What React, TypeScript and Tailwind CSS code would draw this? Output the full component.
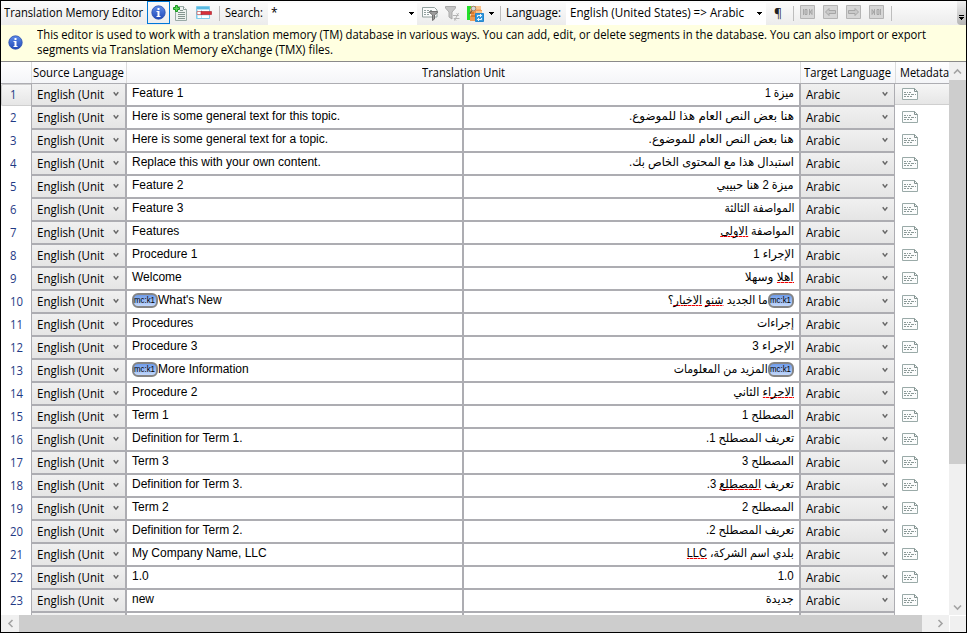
import { useLayoutEffect, useRef, type ReactNode } from "react";

/** Single line of text, condensed or expanded horizontally to a given width. */
function Fit({ w, right, className = "", children }: { w: number; right?: boolean; className?: string; children: ReactNode }) {
  const ref = useRef<HTMLSpanElement>(null);
  useLayoutEffect(() => {
    const el = ref.current;
    if (!el) return;
    el.style.transform = "none";
    const natural = el.getBoundingClientRect().width;
    if (natural > 0) el.style.transform = `scaleX(${w / natural})`;
  }, [w]);
  return (
    <span ref={ref} className={`inline-block shrink-0 whitespace-pre ${right ? "origin-right" : "origin-left"} ${className}`}>
      {children}
    </span>
  );
}

type Row = { en: string; ar: ReactNode; w: number; tag?: boolean };

const Bad = ({ children }: { children: ReactNode }) => (
  <span className="bg-[repeating-linear-gradient(90deg,#f00000_0_3px,#ff9090_3px_4px)] bg-[length:100%_1px] bg-[position:0_calc(100%-1px)] bg-no-repeat">{children}</span>
);

const rows: Row[] = [
  { en: "Feature 1", ar: "ميزة 1", w: 29 },
  { en: "Here is some general text for this topic.", ar: "هنا بعض النص العام هذا للموضوع.", w: 165 },
  { en: "Here is some general text for a topic.", ar: "هنا بعض النص العام للموضوع.", w: 145 },
  { en: "Replace this with your own content.", ar: "استبدال هذا مع المحتوى الخاص بك.", w: 165 },
  { en: "Feature 2", ar: "ميزة 2 هنا حبيبي", w: 77 },
  { en: "Feature 3", ar: "المواصفة الثالثة", w: 70 },
  { en: "Features", ar: <>المواصفة <Bad>الاولى</Bad></>, w: 74 },
  { en: "Procedure 1", ar: "الإجراء 1", w: 41 },
  { en: "Welcome", ar: <><Bad>اهلا</Bad> وسهلا</>, w: 49 },
  { en: "What's New", ar: <>ما الجديد <Bad>شنو</Bad> <Bad>الاخبار</Bad>؟</>, w: 100, tag: true },
  { en: "Procedures", ar: "إجراءات", w: 37 },
  { en: "Procedure 3", ar: "الإجراء 3", w: 42 },
  { en: "More Information", ar: "المزيد من المعلومات", w: 94, tag: true },
  { en: "Procedure 2", ar: <><Bad>الاجراء</Bad> الثاني</>, w: 61 },
  { en: "Term 1", ar: "المصطلح 1", w: 52 },
  { en: "Definition for Term 1.", ar: "تعريف المصطلح 1.", w: 88 },
  { en: "Term 3", ar: "المصطلح 3", w: 52 },
  { en: "Definition for Term 3.", ar: <>تعريف <Bad>المصطلع</Bad> 3.</>, w: 87 },
  { en: "Term 2", ar: "المصطلح 2", w: 52 },
  { en: "Definition for Term 2.", ar: "تعريف المصطلح 2.", w: 88 },
  { en: "My Company Name, LLC", ar: <>بلدي اسم الشركة، <Bad>LLC</Bad></>, w: 107 },
  { en: "1.0", ar: "1.0", w: 16 },
  { en: "new", ar: "جديدة", w: 28 },
];

const Tag = () => (
  <span dir="ltr" className="flex h-[15px] w-[26px] shrink-0 items-center rounded-[6px] border-2 border-[#858585] bg-linear-to-b from-[#6f9cea] to-[#c3d8fb]">
    <Fit w={21} className="text-[9px] leading-[11px] text-black">mc:k1</Fit>
  </span>
);

const Chevron = () => (
  <svg width="6" height="6" viewBox="0 0 6 6" className="mb-[2px] shrink-0">
    <path d="M.7 1.2 3 4.2 5.3 1.2" fill="none" stroke="#666" strokeWidth="1.4" />
  </svg>
);

const ScrollArrow = ({ d, color = "#a3a3a3" }: { d: string; color?: string }) => (
  <svg width="9" height="9" viewBox="0 0 9 9">
    <path d={d} fill="none" stroke={color} strokeWidth="1.6" />
  </svg>
);
const UP = "M1 6.5 4.5 3 8 6.5";
const DOWN = "M1 2.5 4.5 6 8 2.5";
const LEFT = "M6.5 1 3 4.5 6.5 8";
const RIGHT = "M2.5 1 6 4.5 2.5 8";

const DropArrow = () => (
  <svg width="5" height="3" viewBox="0 0 5 3" shapeRendering="crispEdges" className="shrink-0">
    <path d="M0 0h5v1H4v1H3v1H2V2H1V1H0z" fill="#000" />
  </svg>
);

const Sep = ({ className }: { className: string }) => <div className={`h-[15px] w-px shrink-0 bg-[#bdbdbd] ${className}`} />;

const InfoIcon = () => (
  <svg width="15" height="15" viewBox="0 0 15 15" className="shrink-0">
    <defs>
      <linearGradient id="info" x1="0" y1="0" x2="0" y2="1">
        <stop offset="0" stopColor="#5f8ce8" />
        <stop offset="1" stopColor="#2049b8" />
      </linearGradient>
    </defs>
    <circle cx="7.5" cy="7.5" r="6.7" fill="url(#info)" stroke="#2b4fae" strokeWidth=".8" />
    <path d="M6.5 3h2v2h-2zM5.500 6h3v5h1v1h-4v-1h1V7h-1z" fill="#fff" />
  </svg>
);

const AddDocIcon = () => (
  <svg width="15" height="16" viewBox="0 0 15 16" className="mb-px ml-[3px] shrink-0">
    <path d="M2.5 1.5h8l3 3v11h-11z" fill="#edf1ef" stroke="#9aaaa6" />
    <path d="M10.5 1.5v3h3" fill="#fff" stroke="#8b9c98" />
    <path d="M7 5.5h3M5 7.5h7M5 9.5h7M5 11.5h7M5 13.5h7" stroke="#84958f" />
    <path d="M2.5.5h2v2h2v2h-2v2h-2v-2h-2v-2h2z" fill="#5fd35a" stroke="#199a20" />
  </svg>
);

const DeleteRowIcon = () => (
  <svg width="16" height="14" viewBox="0 0 16 14" className="ml-[8px] shrink-0">
    <path d="M.5.5h13v12H.5z" fill="#b7e3f5" stroke="#7fcbea" />
    <path d="M1 1h12v2H1z" fill="#58b8e0" />
    <path d="M2 4h3v1.500H2zm4 0h7v1.500H6zM2 9.500h3V12H2zm4 0h7V12H6z" fill="#fff" />
    <path d="M1 5.500h5v3H1z" fill="#fff" stroke="#c66" strokeWidth=".8" />
    <path d="M5 5.500h10.500v3H5z" fill="#d8303a" stroke="#a81f28" strokeWidth=".6" />
  </svg>
);

const CardFilterIcon = () => (
  <svg width="16" height="15" viewBox="0 0 16 15" className="ml-[5px] shrink-0">
    <path d="M.5 1.5h12l2.500 2.500v7H.5z" fill="#fbfcfc" stroke="#93a19f" />
    <path d="M2 4.500h9M2 6.500h6M2 8.500h6" stroke="#93a19f" strokeDasharray="2 1" />
    <path d="M7.500 5.500h8v1l-3 2.500v4l-2 1.500V9l-3-2.500z" fill="#9c9c9c" stroke="#666" strokeWidth=".9" />
  </svg>
);

const FilterOffIcon = () => (
  <svg width="15" height="16" viewBox="0 0 15 16" className="ml-[7px] shrink-0">
    <path d="M.5 1.500h10v1.500L7 7v7l-3-2V7L.5 3z" fill="#c4c4c4" stroke="#a9a9a9" />
    <path d="M8 10.500h5.500M11.500 8.500l2 2M14.500 13.500H9M11 15.500l-2-2M13.500 8l-4 7.500" fill="none" stroke="#b4b4b4" />
  </svg>
);

const PeopleIcon = () => (
  <svg width="17" height="17" viewBox="0 0 17 17" className="ml-[7px] shrink-0">
    <path d="M0 1h4v3H3v2h1v3H3v2h1v4H0z" fill="#23e02b" />
    <path d="M4 1h10v4h1v5H9v6H3v-4l1-3-1-3z" fill="#ee9a55" />
    <path d="M9 1h5v3.500H9zM9 6h6v2H9z" fill="#f9c48e" />
    <path d="M3 7h4v2H3zM4 10h4v2H4z" fill="#d97b2e" />
    <path d="M5 5.500 2.500 9" stroke="#6b5a45" strokeWidth="1.200" />
    <circle cx="6.500" cy="3.500" r="2.300" fill="#d3dce0" stroke="#8a7d6a" strokeWidth=".8" />
    <path d="M8.500 8.500h8v8h-8z" fill="#3398dd" stroke="#2585cb" />
    <path d="M10.500 12v-1.500h4M13 9l1.500 1.500L13 12M14.500 13v1.500h-4M12 13l-1.500 1.500L12 16" fill="none" stroke="#fff" strokeWidth=".9" />
  </svg>
);

const NavIcon = ({ d, className }: { d: string; className: string }) => (
  <svg width="15" height="14" viewBox="0 0 15 14" className={`mb-[2px] shrink-0 ${className}`}>
    <path d="M.5.5h14v13H.5z" fill="#d6d6d6" stroke="#b4b4b4" />
    <path d={d} fill="#c9c9c9" stroke="#a2a2a2" strokeWidth=".9" />
  </svg>
);
const EDGE_L = "M3.500 4v6M5 4.500h2v5H5zM9.500 4v6M12 4.500v5L10 7z";
const EDGE_R = "M11.500 4v6M8 4.500h2v5H8zM5.500 4v6M3 4.500v5L5 7z";
const ARROW_L = "M2.500 7 6 3.500v2h6.500v3H6v2z";
const ARROW_R = "M12.500 7 9 3.500v2H2.500v3H9v2z";

const MetaIcon = () => (
  <svg width="16" height="12" viewBox="0 0 16 12" className="shrink-0">
    <path d="M.5.500h12l3 3v8H.500z" fill="#fbfcfc" stroke="#9aaaa8" />
    <path d="M12.500.500v3h3" fill="none" stroke="#82918f" />
    <path d="M2 4.500h8" stroke="#8b9997" strokeDasharray="2 1 1 1" />
    <path d="M2 6.500h12" stroke="#8b9997" strokeDasharray="3 1 2 1" />
    <path d="M2 8.500h8" stroke="#8b9997" strokeDasharray="2 1" />
  </svg>
);

const langCell = "flex h-[21px] shrink-0 items-center justify-between bg-linear-to-b from-[#f0f0f0] to-[#e5e5e5]";

function GridRow({ row, n }: { row?: Row; n: number }) {
  const first = n === 1;
  return (
    <div className="flex h-[23px] shrink-0">
      <div
        className={`h-[22px] w-[30px] shrink-0 ${first ? "rounded-l-[2px] border border-r-0 border-[#cfcfcf] bg-linear-to-b from-[#f6f6f6] to-[#e6e6e6] pl-[8px] leading-[20px]" : "pl-[9px] leading-[22px]"} text-[#1f3a85]`}
      >
        {row && <Fit w={n > 9 ? 13 : 6.5}>{n}</Fit>}
      </div>
      <div className="flex h-[23px] w-[864px] shrink-0 gap-[2px] border-r border-b-2 border-l border-[#adadb2] bg-[#adadb2]">
        <div className={`${langCell} w-[93px] pr-[6px] pl-[5px]`}>
          {row && <><Fit w={67} className="leading-[20px]">English (Unit</Fit><Chevron /></>}
        </div>
        <div className="flex h-[21px] w-[335px] shrink-0 items-start bg-white pt-[2px] pl-[5px] font-['Liberation_Sans',Arial,sans-serif] leading-[15px]">
          {row?.tag && <Tag />}
          <span className="whitespace-pre">{row?.en}</span>
        </div>
        <div dir="rtl" className="flex h-[21px] w-[335px] shrink-0 items-start bg-white pt-[2px] pr-[5px] font-['Liberation_Sans','DejaVu_Sans',sans-serif] leading-[15px]">
          {row?.tag && <Tag />}
          {row && <Fit w={row.w} right>{row.ar}</Fit>}
        </div>
        <div className={`${langCell} flex-1 pr-[6px] pl-[5px]`}>
          {row && <><Fit w={34} className="leading-[20px]">Arabic</Fit><Chevron /></>}
        </div>
      </div>
      <div className={`flex h-[21px] flex-1 items-start pt-[4px] pl-[7px] ${first ? "border-b border-[#cfcfcf] bg-linear-to-b from-[#f6f6f6] to-[#e6e6e6]" : ""}`}>
        {row && <MetaIcon />}
      </div>
    </div>
  );
}

export default function App() {
  return (
    <div className="flex h-[633px] w-[967px] flex-col overflow-hidden border border-black bg-white font-['Open_Sans','Noto_Sans',sans-serif] text-[12px] text-black">
      <div className="flex h-[24px] shrink-0 items-center bg-linear-to-b from-[#fcfcfc] to-[#ececec]">
        <div className="w-[146px] shrink-0 pl-[3px] leading-[22px]"><Fit w={139}>Translation Memory Editor</Fit></div>
        <div className="flex h-[23px] w-[23px] shrink-0 items-center justify-center self-start border border-[#0078d7]"><InfoIcon /></div>
        <AddDocIcon />
        <DeleteRowIcon />
        <Sep className="ml-[7px]" />
        <div className="ml-[5px] w-[43px] shrink-0 leading-[22px]"><Fit w={38}>Search:</Fit></div>
        <div className="flex h-[22px] w-[149px] shrink-0 items-center justify-between self-end bg-white pr-[3px] pb-[2px] pl-[3px] leading-[20px]">
          <span>*</span><DropArrow />
        </div>
        <CardFilterIcon />
        <FilterOffIcon />
        <PeopleIcon />
        <div className="ml-[5px] flex"><DropArrow /></div>
        <Sep className="ml-[6px]" />
        <div className="ml-[5px] w-[60px] shrink-0 leading-[22px]"><Fit w={55}>Language:</Fit></div>
        <div className="flex h-[22px] w-[200px] shrink-0 items-center justify-between self-end bg-white pr-[4px] pb-[2px] pl-[4px]">
          <Fit w={174} className="leading-[20px]">English (United States) =&gt; Arabic</Fit><DropArrow />
        </div>
        <div className="ml-[8px] w-[9px] shrink-0 text-[13px] leading-[22px] text-[#222]"><Fit w={8}>¶</Fit></div>
        <Sep className="ml-[10px]" />
        <NavIcon d={EDGE_L} className="ml-[6px]" />
        <NavIcon d={ARROW_L} className="ml-[8px]" />
        <NavIcon d={ARROW_R} className="ml-[8px]" />
        <NavIcon d={EDGE_R} className="ml-[8px]" />
        <Sep className="ml-[7px]" />
        <div className="ml-auto flex h-[24px] w-[9px] flex-col items-center gap-[1px] rounded-bl bg-linear-to-b from-[#f0f0f0] to-[#b5b5b5] pt-[14px]">
          <div className="h-px w-[5px] shrink-0 bg-black" />
          <DropArrow />
        </div>
      </div>

      <div className="flex h-[37px] shrink-0 border-b border-[#8a8a8a] bg-[#ffffe1]">
        <div className="w-[36px] shrink-0 pt-[10px] pl-[7px]"><InfoIcon /></div>
        <div className="flex flex-1 flex-col pt-[2px] leading-[15px]">
          <Fit w={889} className="self-start">This editor is used to work with a translation memory (TM) database in various ways. You can add, edit, or delete segments in the database. You can also import or export</Fit>
          <Fit w={296} className="self-start">segments via Translation Memory eXchange (TMX) files.</Fit>
        </div>
        <div className="my-[2px] flex w-[16px] shrink-0 flex-col items-center justify-between bg-[#f0f0f0] py-[3px]">
          <ScrollArrow d={UP} color="#bfbfbf" />
          <ScrollArrow d={DOWN} color="#bfbfbf" />
        </div>
      </div>

      <div className="flex min-h-0 flex-1">
        <div className="flex w-[948px] shrink-0 flex-col overflow-hidden">
          <div className="flex h-[22px] shrink-0 border-b border-[#adadb2] bg-linear-to-b from-white to-[#f4f5f8] leading-[21px]">
            <div className="w-[30px] shrink-0" />
            <div className="w-[95px] shrink-0 border-l border-[#dcdcdc] pl-px"><Fit w={91}>Source Language</Fit></div>
            <div className="flex w-[674px] shrink-0 justify-center border-l border-[#dcdcdc]"><div className="w-[83px]"><Fit w={83}>Translation Unit</Fit></div></div>
            <div className="w-[95px] shrink-0 border-l border-[#dcdcdc] pl-[3px]"><Fit w={87}>Target Language</Fit></div>
            <div className="flex-1 border-l border-[#dcdcdc] pl-[4px]"><Fit w={49}>Metadata</Fit></div>
          </div>
          {rows.map((row, i) => <GridRow key={i} row={row} n={i + 1} />)}
          <GridRow n={24} />
        </div>
        <div className="flex flex-1 flex-col items-center bg-[#f0f0f0]">
          <div className="flex h-[18px] shrink-0 items-center"><ScrollArrow d={UP} /></div>
          <div className="h-[384px] w-full shrink-0 bg-[#cdcdcd]" />
          <div className="mt-auto mb-[3px]"><ScrollArrow d={DOWN} /></div>
        </div>
      </div>

      <div className="flex h-[17px] shrink-0 bg-[#f0f0f0]">
        <div className="flex w-[18px] items-center justify-center"><ScrollArrow d={LEFT} /></div>
        <div className="w-[903px] bg-[#cdcdcd]" />
        <div className="flex w-[27px] items-center justify-end pr-[4px]"><ScrollArrow d={RIGHT} /></div>
        <div className="flex-1 border-t border-l border-white" />
      </div>
    </div>
  );
}
